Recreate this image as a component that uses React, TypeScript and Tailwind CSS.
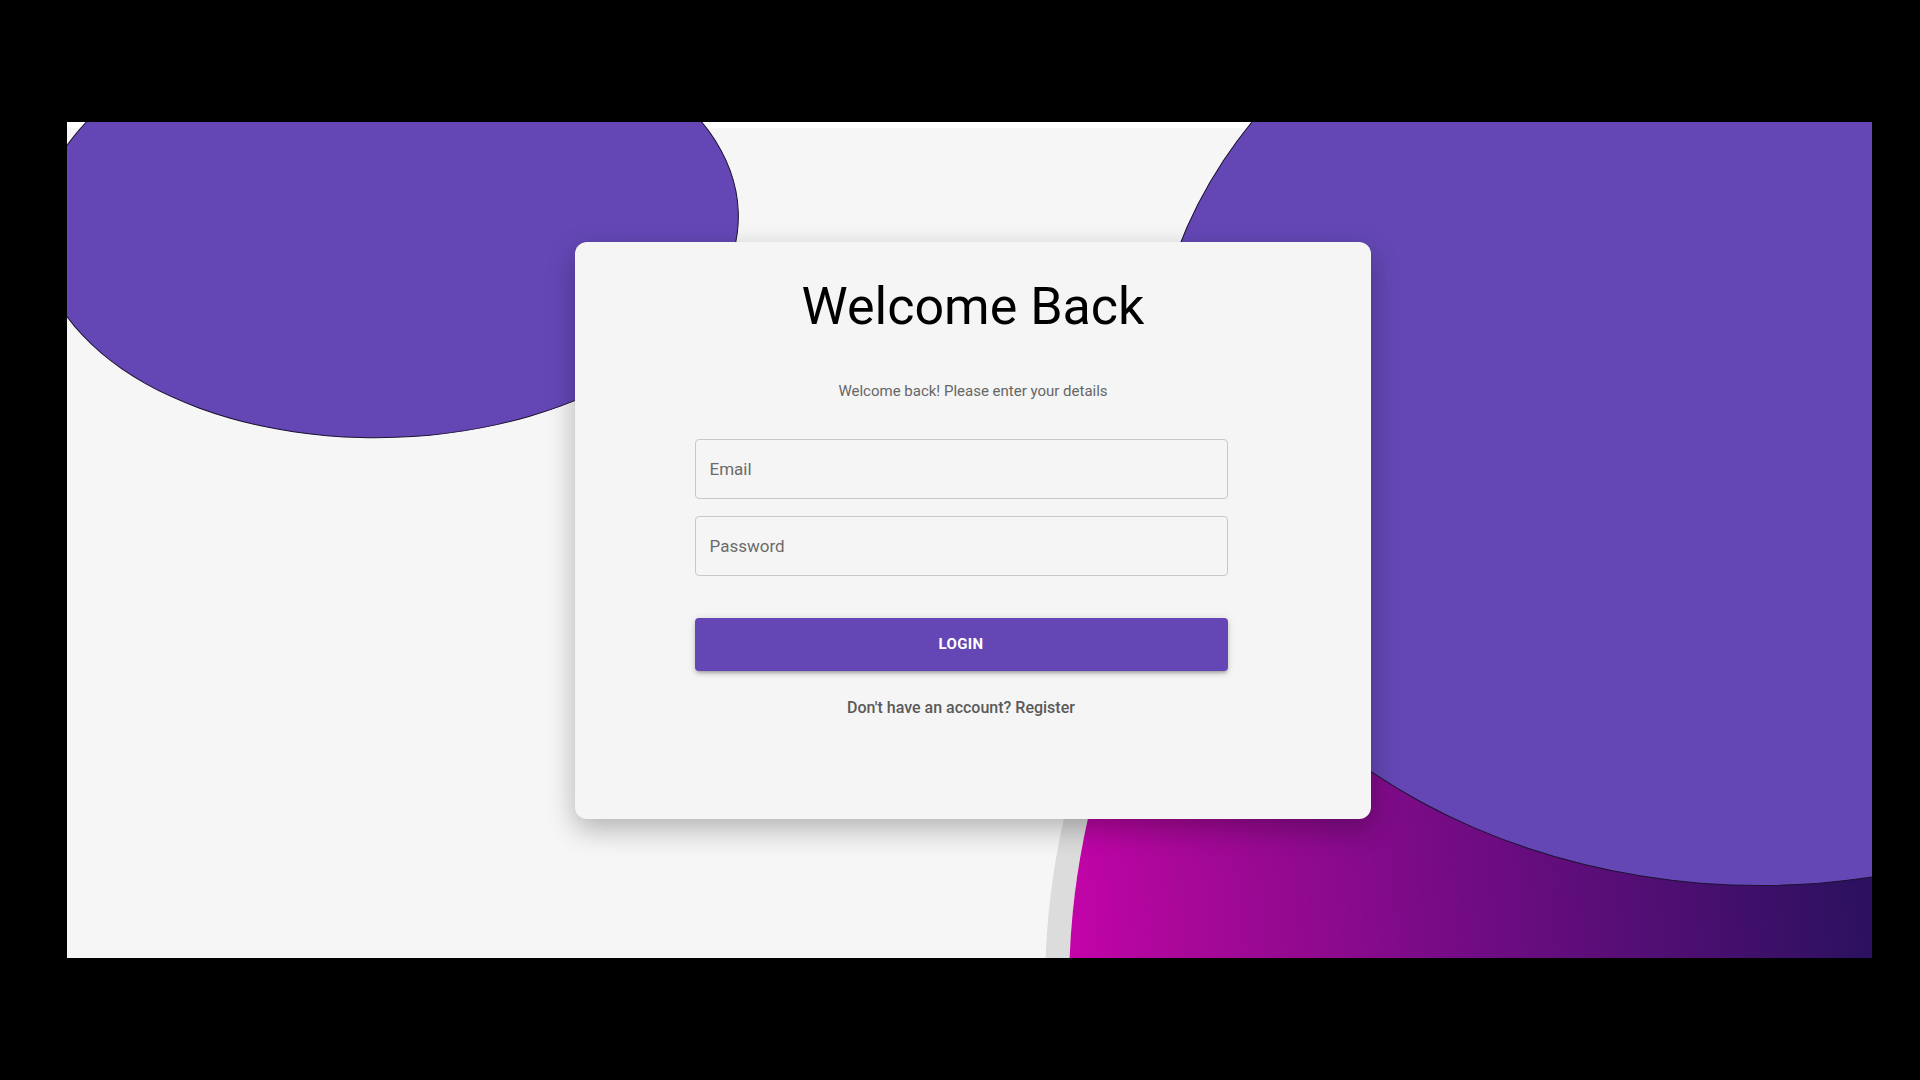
import { useState } from 'react'

function Field({ label, type }: { label: string; type: string }) {
  const [value, setValue] = useState('')
  return (
    <input
      type={type}
      value={value}
      onChange={(e) => setValue(e.target.value)}
      placeholder={label}
      className="h-[60px] w-full rounded-[4px] border border-[#c8c8c8] bg-transparent px-[14px] text-[17px] text-[#222] placeholder:text-[#6b6b6b] outline-none focus:border-[#6447b5]"
    />
  )
}

export default function App() {
  return (
    <div className="flex h-screen w-full bg-black pt-[122px] pb-[122px] pl-[67px] pr-[48px] font-['Roboto',sans-serif]">
      <div className="relative flex flex-1 items-center justify-center overflow-hidden bg-[linear-gradient(#ffffff_0,#ffffff_6px,#f6f6f6_6px)] pb-[19px] pl-[7px]">
        {/* background blobs */}
        <div className="absolute left-[1002px] top-[99px] h-[1534px] w-[1534px] rounded-full bg-[linear-gradient(84deg,#d800b6_0%,#a80898_12%,#6e0c82_30%,#2c1160_52%,#1e0b45_100%)] shadow-[-24px_0_0_#dcdcdc]" aria-hidden />
        <div className="absolute left-[-30px] top-[-112px] h-[428px] w-[702px] -rotate-2 rounded-[50%] border border-[#1d1233] bg-[#6447b5]" aria-hidden />
        <div className="absolute left-[1084px] top-[-222px] h-[986px] w-[1218px] rounded-[50%] border border-[#1d1233] bg-[#6447b5]" aria-hidden />

        {/* login card */}
        <div className="relative z-10 flex h-[577px] w-[796px] flex-col items-center rounded-[12px] bg-[#f5f5f5] pt-[38px] shadow-[0_10px_28px_rgba(0,0,0,0.28)]">
          <h1 className="text-[52px] font-normal leading-[54px] text-black">Welcome Back</h1>
          <p className="mt-[47px] text-[15px] leading-[20px] text-[#666]">
            Welcome back! Please enter your details
          </p>

          <form className="mt-[38px] mr-[24px] flex w-[533px] flex-col" onSubmit={(e) => e.preventDefault()}>
            <Field label="Email" type="email" />
            <div className="mt-[17px]">
              <Field label="Password" type="password" />
            </div>
            <button
              type="submit"
              className="mt-[42px] h-[53px] w-full rounded-[4px] bg-[#6447b5] text-[15px] font-bold uppercase tracking-[0.4px] text-white shadow-[0_3px_3px_-2px_rgba(0,0,0,0.2),0_3px_4px_0_rgba(0,0,0,0.14),0_1px_8px_0_rgba(0,0,0,0.12)]"
            >
              Login
            </button>
            <p className="mt-[27px] text-center text-[16px] font-medium leading-[20px] text-[#5a5a5a]">
              Don't have an account? Register
            </p>
          </form>
        </div>
      </div>
    </div>
  )
}
